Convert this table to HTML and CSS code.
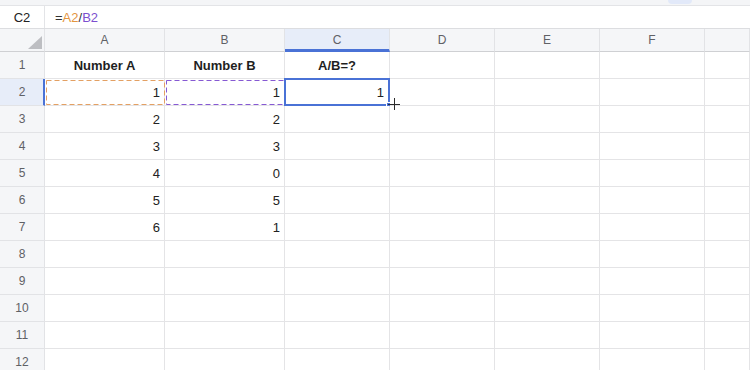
FILE: index.html
```html
<!DOCTYPE html>
<html lang="en">
<head>
<meta charset="utf-8">
<title>Sheet</title>
<link rel="stylesheet" href="styles.css">
</head>
<body>
<div class="app">
  <div class="toolbar-strip"><span class="strip-tab"></span></div>
  <div class="formula-bar">
    <div class="name-box">C2</div>
    <div class="formula"><span>=</span><span class="ref-a">A2</span><span>/</span><span class="ref-b">B2</span></div>
  </div>
  <div class="sheet">
    <div class="corner"><svg width="14" height="13" viewBox="0 0 14 13"><polygon points="0,13 14,13 14,0" fill="#bdbec2"/></svg></div>
    <div class="col-head">A</div>
    <div class="col-head">B</div>
    <div class="col-head active">C</div>
    <div class="col-head">D</div>
    <div class="col-head">E</div>
    <div class="col-head">F</div>
    <div class="col-head"></div>

    <div class="row-head">1</div>
    <div class="cell head">Number A</div>
    <div class="cell head">Number B</div>
    <div class="cell head">A/B=?</div>
    <div class="cell"></div><div class="cell"></div><div class="cell"></div><div class="cell"></div>

    <div class="row-head active">2</div>
    <div class="cell num">
      <svg class="ref-box" width="121" height="27" viewBox="0 0 121 27"><rect x="1.5" y="1.5" width="118" height="24" fill="none" stroke="#e3a063" stroke-width="1" stroke-dasharray="5 3"/></svg>1
    </div>
    <div class="cell num">
      <svg class="ref-box" width="121" height="27" viewBox="0 0 121 27"><rect x="1.5" y="1.5" width="118" height="24" fill="none" stroke="#8659d3" stroke-width="1" stroke-dasharray="5 3"/></svg>1
    </div>
    <div class="cell num selected">1<span class="sel-box"><span class="fill-handle"></span></span><span class="crosshair"></span></div>
    <div class="cell"></div><div class="cell"></div><div class="cell"></div><div class="cell"></div>

    <div class="row-head">3</div>
    <div class="cell num">2</div><div class="cell num">2</div>
    <div class="cell"></div><div class="cell"></div><div class="cell"></div><div class="cell"></div><div class="cell"></div>

    <div class="row-head">4</div>
    <div class="cell num">3</div><div class="cell num">3</div>
    <div class="cell"></div><div class="cell"></div><div class="cell"></div><div class="cell"></div><div class="cell"></div>

    <div class="row-head">5</div>
    <div class="cell num">4</div><div class="cell num">0</div>
    <div class="cell"></div><div class="cell"></div><div class="cell"></div><div class="cell"></div><div class="cell"></div>

    <div class="row-head">6</div>
    <div class="cell num">5</div><div class="cell num">5</div>
    <div class="cell"></div><div class="cell"></div><div class="cell"></div><div class="cell"></div><div class="cell"></div>

    <div class="row-head">7</div>
    <div class="cell num">6</div><div class="cell num">1</div>
    <div class="cell"></div><div class="cell"></div><div class="cell"></div><div class="cell"></div><div class="cell"></div>

    <div class="row-head">8</div>
    <div class="cell"></div><div class="cell"></div><div class="cell"></div><div class="cell"></div><div class="cell"></div><div class="cell"></div><div class="cell"></div>

    <div class="row-head">9</div>
    <div class="cell"></div><div class="cell"></div><div class="cell"></div><div class="cell"></div><div class="cell"></div><div class="cell"></div><div class="cell"></div>

    <div class="row-head">10</div>
    <div class="cell"></div><div class="cell"></div><div class="cell"></div><div class="cell"></div><div class="cell"></div><div class="cell"></div><div class="cell"></div>

    <div class="row-head">11</div>
    <div class="cell"></div><div class="cell"></div><div class="cell"></div><div class="cell"></div><div class="cell"></div><div class="cell"></div><div class="cell"></div>

    <div class="row-head">12</div>
    <div class="cell"></div><div class="cell"></div><div class="cell"></div><div class="cell"></div><div class="cell"></div><div class="cell"></div><div class="cell"></div>
  </div>
</div>
</body>
</html>
```

FILE: styles.css
```css
* { box-sizing: border-box; }

html, body {
  margin: 0;
  padding: 0;
  background: #ffffff;
  overflow: hidden;
}

.app {
  width: 750px;
  height: 370px;
  overflow: hidden;
  font-family: "Liberation Sans", Arial, sans-serif;
  font-size: 13px;
  color: #222;
}

/* thin strip left over from the toolbar above */
.toolbar-strip {
  height: 6px;
  background: #f4f5f7;
  border-bottom: 1px solid #e3e4e7;
  display: flex;
  padding-left: 668px;
}
.strip-tab {
  width: 24px;
  height: 4px;
  background: #e2e9f9;
  border-radius: 0 0 4px 4px;
}

/* formula bar */
.formula-bar {
  height: 23px;
  display: flex;
  border-bottom: 1px solid #dcdde0;
}
.name-box {
  width: 45px;
  border-right: 1px solid #e3e4e7;
  display: flex;
  align-items: center;
  justify-content: center;
  color: #222;
  font-size: 13px;
}
.formula {
  display: flex;
  align-items: center;
  padding-left: 10px;
  font-size: 13px;
  color: #333;
}
.ref-a { color: #e3953f; }
.ref-b { color: #7c4fcf; }

/* grid */
.sheet {
  display: grid;
  grid-template-columns: 45px 120px 120px 105px 105px 105px 105px 45px;
  grid-template-rows: 23px repeat(12, 27px);
}

.corner,
.col-head {
  background: #f5f6f8;
  border-right: 1px solid #e2e3e6;
  border-bottom: 1px solid #cfd0d3;
}
.corner {
  display: flex;
  align-items: flex-end;
  justify-content: flex-end;
  padding: 0 2px 2px 0;
}
.corner svg { display: block; }

.col-head {
  display: flex;
  align-items: center;
  justify-content: center;
  color: #5f6166;
  font-size: 12px;
}
.col-head.active {
  background: #e7edf9;
  border-bottom: 3px solid #4a72d6;
  padding-top: 2px;
}

.row-head {
  background: #f5f6f8;
  border-right: 1px solid #e2e3e6;
  border-bottom: 1px solid #e2e3e6;
  display: flex;
  align-items: center;
  justify-content: center;
  color: #5f6166;
  font-size: 12px;
}
.row-head.active {
  background: #e7edf9;
  border-right: 2px solid #4a72d6;
  padding-left: 1px;
}

.cell {
  position: relative;
  border-right: 1px solid #e4e4e6;
  border-bottom: 1px solid #e4e4e6;
  display: flex;
  align-items: center;
  padding: 0 4px;
}
.cell.head {
  justify-content: center;
  font-weight: bold;
  font-size: 13px;
  color: #1f1f1f;
}
.cell.num {
  justify-content: flex-end;
  font-size: 13px;
  color: #222;
}

/* dashed outlines around the cells the formula refers to */
.ref-box {
  position: absolute;
  left: 0;
  top: 0;
  overflow: visible;
  pointer-events: none;
}

/* active cell outline */
.cell.selected { padding-right: 5px; }
.sel-box {
  position: absolute;
  left: -1px;
  top: -1px;
  right: -1px;
  bottom: -1px;
  border: 2px solid #4a72d6;
  pointer-events: none;
}
.fill-handle {
  position: absolute;
  right: -3px;
  bottom: -3px;
  width: 5px;
  height: 5px;
  background: #4a72d6;
  border: 1px solid #ffffff;
}

/* mouse pointer resting on the fill handle */
.crosshair {
  position: absolute;
  left: 103px;
  top: 19px;
  width: 12px;
  height: 12px;
  z-index: 2;
  background:
    linear-gradient(#2b2b2b, #2b2b2b) center / 12px 1px no-repeat,
    linear-gradient(#2b2b2b, #2b2b2b) center / 1px 12px no-repeat;
}
```
